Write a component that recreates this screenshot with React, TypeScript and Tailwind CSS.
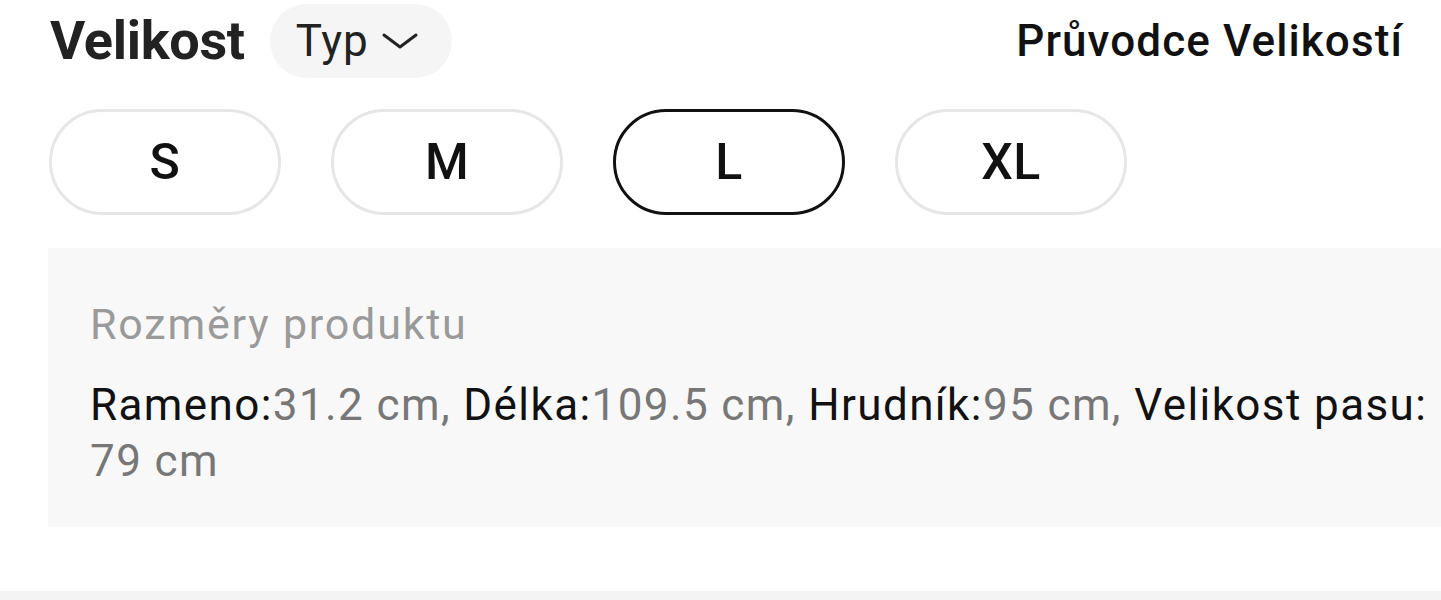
import React from "react";

const sizes = ["S", "M", "L", "XL"];

export default function App() {
  const font = { fontFamily: "Roboto, 'Noto Sans', sans-serif" };
  return (
    <div className="w-[1441px] h-[600px] bg-white overflow-hidden flex flex-col" style={font}>
      <div className="h-[82px] flex items-center pl-[50px] pr-[38px]">
        <div className="text-[54px] font-bold text-[#222] leading-none tracking-[-0.3px]">Velikost</div>
        <div className="ml-[25px] h-[74px] w-[182px] rounded-full bg-[#f5f5f5] flex items-center pl-[26px]">
          <span className="text-[44px] text-[#222] leading-none tracking-[0.8px]">Typ</span>
          <svg className="ml-[12px]" width="40" height="20" viewBox="0 0 40 20" fill="none">
            <path d="M4 4 L20 16 L36 4" stroke="#222" strokeWidth="3" strokeLinecap="round" strokeLinejoin="round" />
          </svg>
        </div>
        <div className="ml-auto text-[44px] font-medium text-[#111] leading-none tracking-[1.1px]">Průvodce Velikostí</div>
      </div>
      <div className="flex gap-[50px] pl-[49px] mt-[27px]">
        {sizes.map((s) => (
          <div
            key={s}
            className={
              s === "L"
                ? "w-[232px] h-[106px] rounded-full border-[3px] border-[#111] flex items-center justify-center text-[50px] font-medium text-[#111] tracking-[0.5px]"
                : "w-[232px] h-[106px] rounded-full border-[3px] border-[#e6e6e6] flex items-center justify-center text-[50px] font-medium text-[#111] tracking-[0.5px]"
            }
          >
            {s}
          </div>
        ))}
      </div>
      <div className="ml-[48px] mt-[33px] h-[279px] bg-[#f8f8f8] pl-[42px] pr-[4px] pt-[50px]">
        <div className="text-[43px] text-[#9a9a9a] leading-[52px] tracking-[1.8px]">Rozměry produktu</div>
        <div className="mt-[27px] text-[44px] leading-[56px] text-[#111] tracking-[1.4px]">
          Rameno:<span className="text-[#777]">31.2 cm, </span>Délka:<span className="text-[#777]">109.5 cm, </span>Hrudník:<span className="text-[#777]">95 cm, </span>Velikost pasu:<span className="text-[#777]"> 79 cm</span>
        </div>
      </div>
      <div className="flex-1" />
      <div className="h-[9px] bg-[#f4f4f4]" />
    </div>
  );
}
